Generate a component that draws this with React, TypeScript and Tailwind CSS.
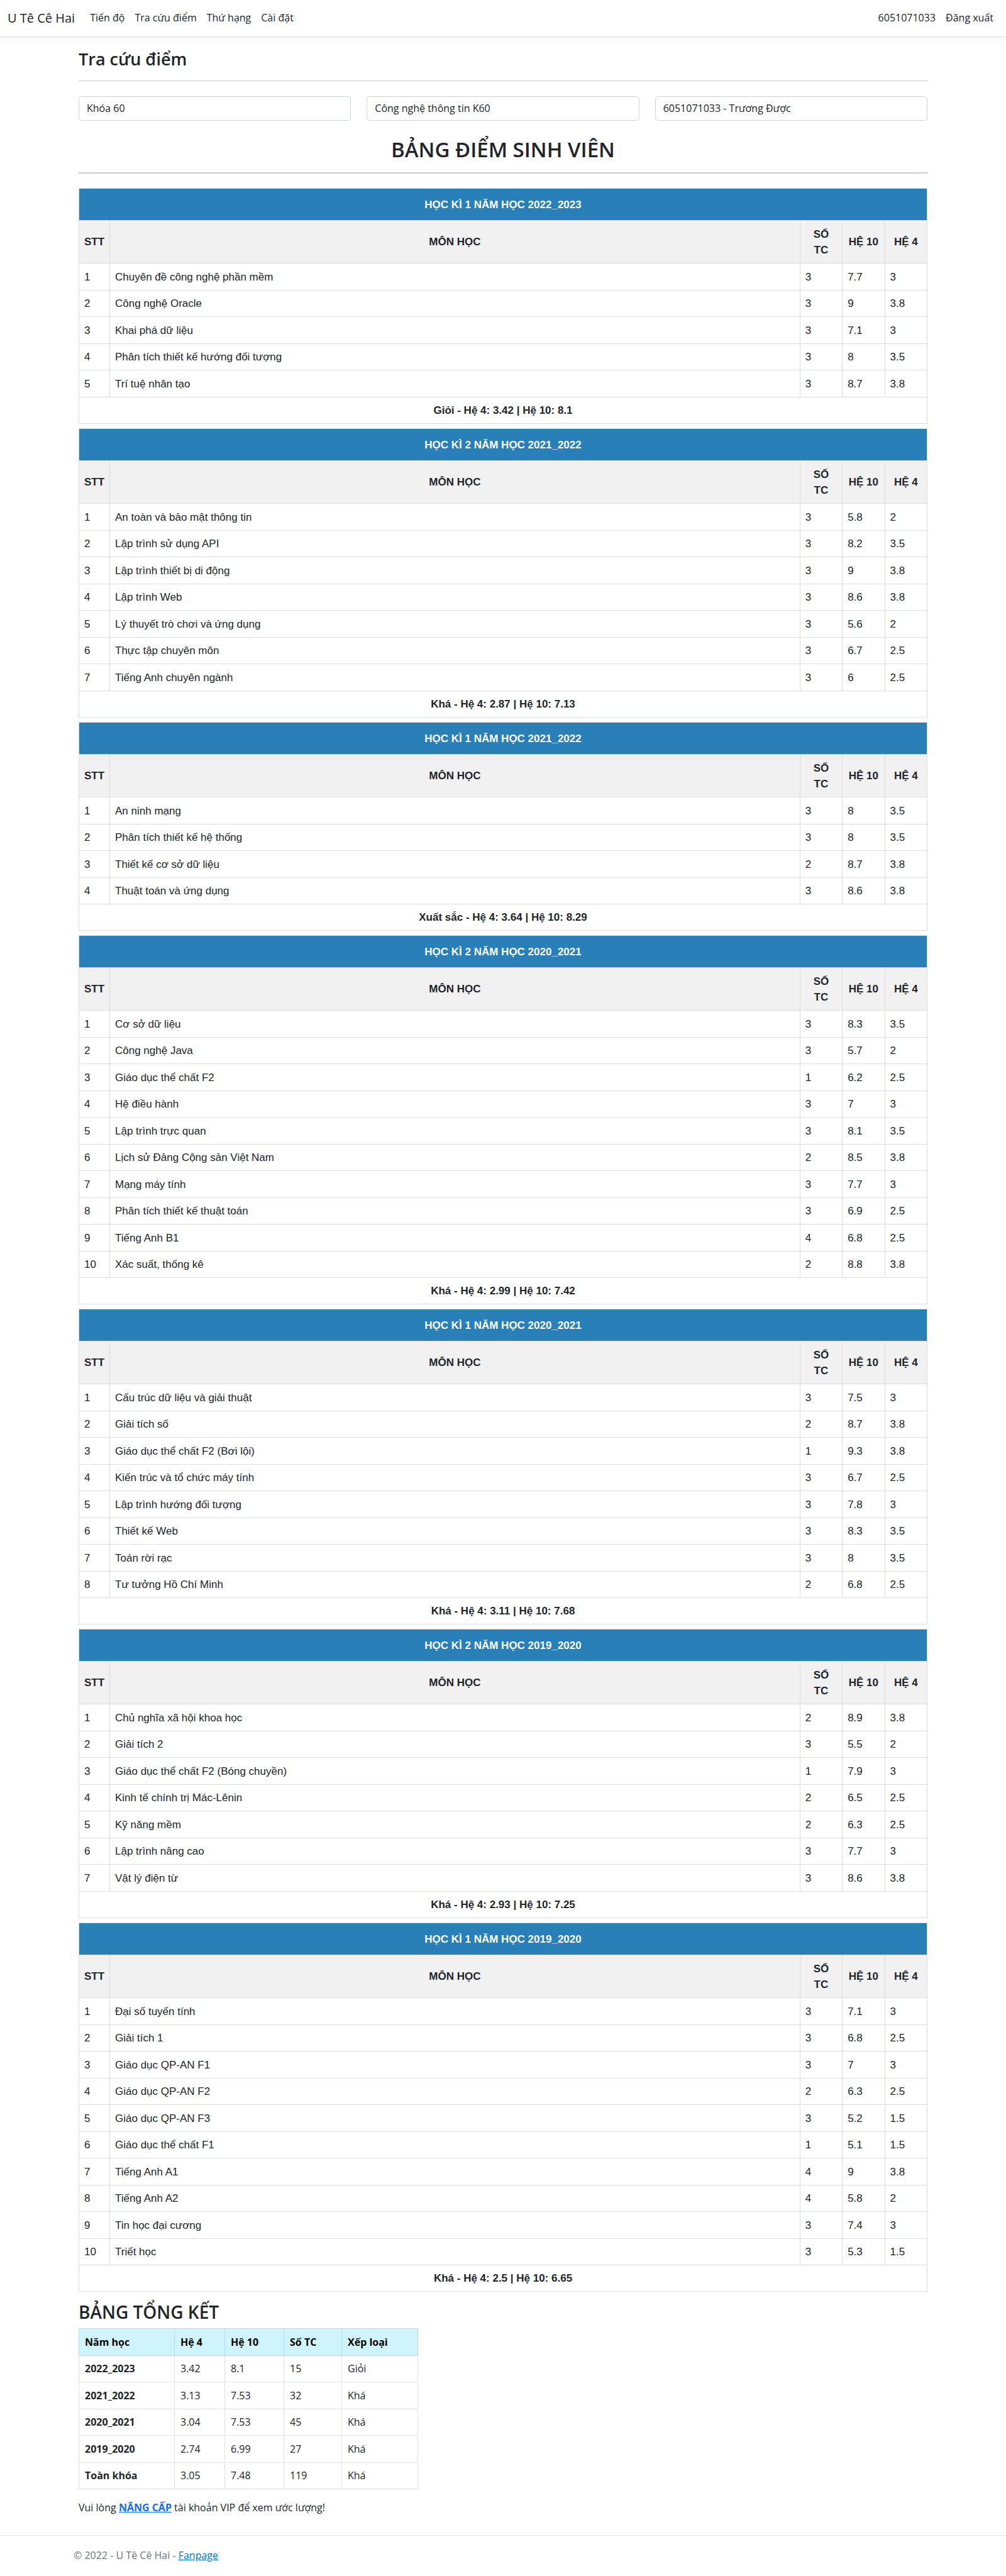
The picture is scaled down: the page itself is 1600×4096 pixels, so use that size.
type Course = [name: string, credits: number, scale10: number, scale4: number];

interface Semester {
  title: string;
  summary: string;
  courses: Course[];
}

const semesters: Semester[] = [
  {
    title: 'HỌC KÌ 1 NĂM HỌC 2022_2023',
    summary: 'Giỏi - Hệ 4: 3.42 | Hệ 10: 8.1',
    courses: [
      ['Chuyên đề công nghệ phần mềm', 3, 7.7, 3],
      ['Công nghệ Oracle', 3, 9, 3.8],
      ['Khai phá dữ liệu', 3, 7.1, 3],
      ['Phân tích thiết kế hướng đối tượng', 3, 8, 3.5],
      ['Trí tuệ nhân tạo', 3, 8.7, 3.8],
    ],
  },
  {
    title: 'HỌC KÌ 2 NĂM HỌC 2021_2022',
    summary: 'Khá - Hệ 4: 2.87 | Hệ 10: 7.13',
    courses: [
      ['An toàn và bảo mật thông tin', 3, 5.8, 2],
      ['Lập trình sử dụng API', 3, 8.2, 3.5],
      ['Lập trình thiết bị di động', 3, 9, 3.8],
      ['Lập trình Web', 3, 8.6, 3.8],
      ['Lý thuyết trò chơi và ứng dụng', 3, 5.6, 2],
      ['Thực tập chuyên môn', 3, 6.7, 2.5],
      ['Tiếng Anh chuyên ngành', 3, 6, 2.5],
    ],
  },
  {
    title: 'HỌC KÌ 1 NĂM HỌC 2021_2022',
    summary: 'Xuất sắc - Hệ 4: 3.64 | Hệ 10: 8.29',
    courses: [
      ['An ninh mạng', 3, 8, 3.5],
      ['Phân tích thiết kế hệ thống', 3, 8, 3.5],
      ['Thiết kế cơ sở dữ liệu', 2, 8.7, 3.8],
      ['Thuật toán và ứng dụng', 3, 8.6, 3.8],
    ],
  },
  {
    title: 'HỌC KÌ 2 NĂM HỌC 2020_2021',
    summary: 'Khá - Hệ 4: 2.99 | Hệ 10: 7.42',
    courses: [
      ['Cơ sở dữ liệu', 3, 8.3, 3.5],
      ['Công nghệ Java', 3, 5.7, 2],
      ['Giáo dục thể chất F2', 1, 6.2, 2.5],
      ['Hệ điều hành', 3, 7, 3],
      ['Lập trình trực quan', 3, 8.1, 3.5],
      ['Lịch sử Đảng Cộng sản Việt Nam', 2, 8.5, 3.8],
      ['Mạng máy tính', 3, 7.7, 3],
      ['Phân tích thiết kế thuật toán', 3, 6.9, 2.5],
      ['Tiếng Anh B1', 4, 6.8, 2.5],
      ['Xác suất, thống kê', 2, 8.8, 3.8],
    ],
  },
  {
    title: 'HỌC KÌ 1 NĂM HỌC 2020_2021',
    summary: 'Khá - Hệ 4: 3.11 | Hệ 10: 7.68',
    courses: [
      ['Cấu trúc dữ liệu và giải thuật', 3, 7.5, 3],
      ['Giải tích số', 2, 8.7, 3.8],
      ['Giáo dục thể chất F2 (Bơi lội)', 1, 9.3, 3.8],
      ['Kiến trúc và tổ chức máy tính', 3, 6.7, 2.5],
      ['Lập trình hướng đối tượng', 3, 7.8, 3],
      ['Thiết kế Web', 3, 8.3, 3.5],
      ['Toán rời rạc', 3, 8, 3.5],
      ['Tư tưởng Hồ Chí Minh', 2, 6.8, 2.5],
    ],
  },
  {
    title: 'HỌC KÌ 2 NĂM HỌC 2019_2020',
    summary: 'Khá - Hệ 4: 2.93 | Hệ 10: 7.25',
    courses: [
      ['Chủ nghĩa xã hội khoa học', 2, 8.9, 3.8],
      ['Giải tích 2', 3, 5.5, 2],
      ['Giáo dục thể chất F2 (Bóng chuyền)', 1, 7.9, 3],
      ['Kinh tế chính trị Mác-Lênin', 2, 6.5, 2.5],
      ['Kỹ năng mềm', 2, 6.3, 2.5],
      ['Lập trình nâng cao', 3, 7.7, 3],
      ['Vật lý điện từ', 3, 8.6, 3.8],
    ],
  },
  {
    title: 'HỌC KÌ 1 NĂM HỌC 2019_2020',
    summary: 'Khá - Hệ 4: 2.5 | Hệ 10: 6.65',
    courses: [
      ['Đại số tuyến tính', 3, 7.1, 3],
      ['Giải tích 1', 3, 6.8, 2.5],
      ['Giáo dục QP-AN F1', 3, 7, 3],
      ['Giáo dục QP-AN F2', 2, 6.3, 2.5],
      ['Giáo dục QP-AN F3', 3, 5.2, 1.5],
      ['Giáo dục thể chất F1', 1, 5.1, 1.5],
      ['Tiếng Anh A1', 4, 9, 3.8],
      ['Tiếng Anh A2', 4, 5.8, 2],
      ['Tin học đại cương', 3, 7.4, 3],
      ['Triết học', 3, 5.3, 1.5],
    ],
  },
];

const totals: [string, string, string, string, string][] = [
  ['2022_2023', '3.42', '8.1', '15', 'Giỏi'],
  ['2021_2022', '3.13', '7.53', '32', 'Khá'],
  ['2020_2021', '3.04', '7.53', '45', 'Khá'],
  ['2019_2020', '2.74', '6.99', '27', 'Khá'],
  ['Toàn khóa', '3.05', '7.48', '119', 'Khá'],
];

const filters = [
  { label: 'Khóa', value: 'Khóa 60' },
  { label: 'Lớp', value: 'Công nghệ thông tin K60' },
  { label: 'Sinh viên', value: '6051071033 - Trương Được' },
];

const cell = 'border border-[#dddddd] px-2';
const totalCell = 'border border-[#dee2e6] px-[9px] text-left';
const totalHead = 'border border-[#badce3] px-[9px] text-left font-bold';

function NavBar() {
  return (
    <nav className="flex h-[59px] items-center border-b border-[#dee2e6] px-3 pb-px shadow-[0_4px_12px_rgba(0,0,0,0.05)]">
      <a href="#" className="mr-6 text-xl">
        U Tê Cê Hai
      </a>
      <div className="flex flex-1 gap-4">
        <a href="#">Tiến độ</a>
        <a href="#">Tra cứu điểm</a>
        <a href="#">Thứ hạng</a>
        <a href="#">Cài đặt</a>
      </div>
      <div className="flex gap-4 pr-2">
        <a href="#">6051071033</a>
        <a href="#">Đăng xuất</a>
      </div>
    </nav>
  );
}

function SemesterTable({ semester }: { semester: Semester }) {
  return (
    <table className="w-full table-fixed border-collapse">
      <colgroup>
        <col className="w-[49px]" />
        <col />
        <col className="w-[5%]" />
        <col className="w-[5%]" />
        <col className="w-[5%]" />
      </colgroup>
      <thead>
        <tr className="h-[51px] bg-[#2980b9] text-white">
          <th colSpan={5} className={cell}>
            {semester.title}
          </th>
        </tr>
        <tr className="h-[68px] bg-[#f1f1f1]">
          <th className={cell}>STT</th>
          <th className={cell}>MÔN HỌC</th>
          <th className={cell}>SỐ TC</th>
          <th className={cell}>HỆ 10</th>
          <th className={cell}>HỆ 4</th>
        </tr>
      </thead>
      <tbody>
        {semester.courses.map(([name, credits, scale10, scale4], i) => (
          <tr key={name} className="odd:h-[43px] even:h-[42px]">
            <td className={cell}>{i + 1}</td>
            <td className={cell}>{name}</td>
            <td className={cell}>{credits}</td>
            <td className={cell}>{scale10}</td>
            <td className={cell}>{scale4}</td>
          </tr>
        ))}
      </tbody>
      <tfoot>
        <tr className="h-[42px]">
          <th colSpan={5} className={cell}>
            {semester.summary}
          </th>
        </tr>
      </tfoot>
    </table>
  );
}

function TotalsTable() {
  return (
    <table className="w-2/5 table-fixed border-collapse">
      <colgroup>
        <col className="w-[152px]" />
        <col className="w-[80px]" />
        <col className="w-[94px]" />
        <col className="w-[92px]" />
        <col />
      </colgroup>
      <thead>
        <tr className="h-[43px] bg-[#cff4fc] text-black">
          <th className={totalHead}>Năm học</th>
          <th className={totalHead}>Hệ 4</th>
          <th className={totalHead}>Hệ 10</th>
          <th className={totalHead}>Số TC</th>
          <th className={totalHead}>Xếp loại</th>
        </tr>
      </thead>
      <tbody>
        {totals.map(([year, scale4, scale10, credits, rank]) => (
          <tr key={year} className="odd:h-[42px] even:h-[43px]">
            <th scope="row" className={totalCell}>
              {year}
            </th>
            <td className={totalCell}>{scale4}</td>
            <td className={totalCell}>{scale10}</td>
            <td className={totalCell}>{credits}</td>
            <td className={totalCell}>{rank}</td>
          </tr>
        ))}
      </tbody>
    </table>
  );
}

export default function App() {
  return (
    <div className="bg-white font-['Open_Sans',sans-serif] text-base leading-[25px] text-[#212529]">
      <NavBar />

      <main className="mx-auto w-full max-w-[1374px] px-3">
        <h1 className="pt-[18px] text-[27px] leading-[34px] font-semibold">Tra cứu điểm</h1>
        <hr className="mt-[17px] border-[#c8c9ca]" />

        <div className="mt-6 grid grid-cols-3 gap-[25px]">
          {filters.map(({ label, value }) => (
            <select
              key={label}
              aria-label={label}
              className="h-[39px] w-full appearance-none rounded-[5px] border border-[#ced4da] bg-white px-3"
            >
              <option>{value}</option>
            </select>
          ))}
        </div>

        <h2 className="mt-[26px] text-center text-[33px] leading-[40px] font-semibold">BẢNG ĐIỂM SINH VIÊN</h2>
        <hr className="mt-4 border-t-2 border-[#c8c9ca]" />

        <div className="mt-[23px] flex flex-col gap-[7px] font-['Liberation_Sans',Arial,sans-serif] text-[17px]">
          {semesters.map((semester) => (
            <SemesterTable key={semester.title} semester={semester} />
          ))}
        </div>

        <h3 className="mt-[15px] mb-2 text-[28px] leading-[35px] font-semibold">BẢNG TỔNG KẾT</h3>
        <TotalsTable />
        <p className="mt-[17px]">
          Vui lòng{' '}
          <a href="#" className="font-bold text-[#0d6efd] underline">
            NÂNG CẤP
          </a>{' '}
          tài khoản VIP để xem ước lượng!
        </p>
      </main>

      <footer className="mt-[31px] border-t border-[#dee2e6] leading-[62px] text-[#6c757d]">
        <div className="mx-auto w-full max-w-[1374px] px-1">
          © 2022 - U Tê Cê Hai -{' '}
          <a href="#" className="text-[#0077cc] underline">
            Fanpage
          </a>
        </div>
      </footer>
    </div>
  );
}
